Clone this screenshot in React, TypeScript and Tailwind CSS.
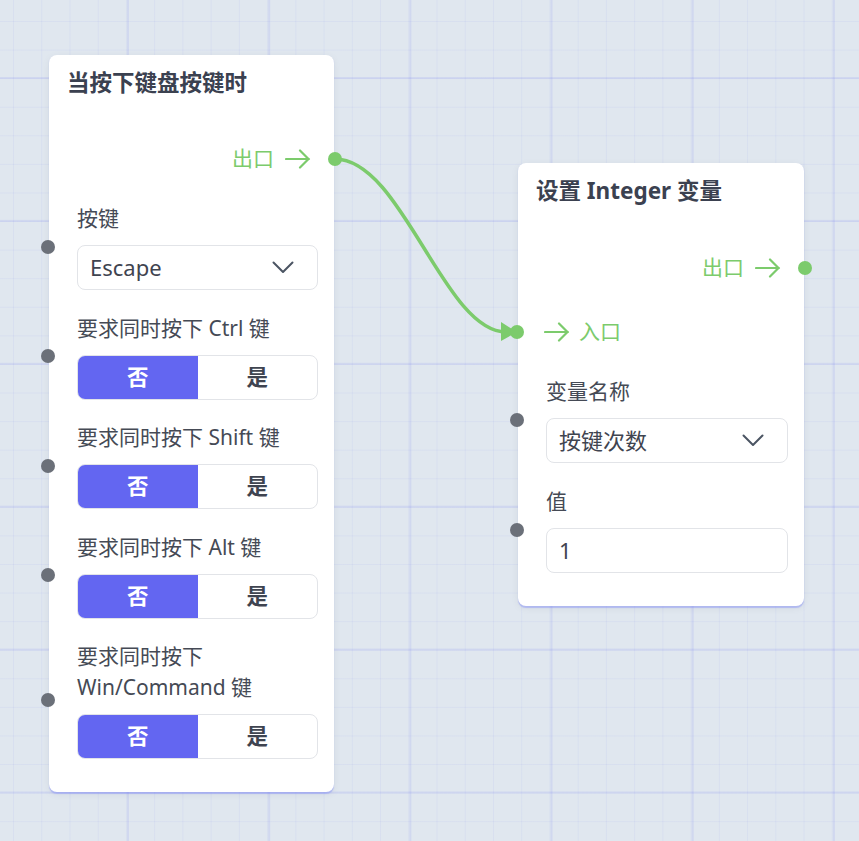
import type { ReactNode } from "react";

const font = "font-['Noto_Sans','Noto_Sans_CJK_SC',sans-serif]";

function ArrowGlyph() {
  return (
    <svg width="26" height="20" viewBox="0 0 26 20" fill="none" className="shrink-0">
      <path d="M1 10h23M15 1.5l8.5 8.5-8.5 8.5" stroke="#7ccb6c" strokeWidth="2.2" strokeLinecap="round" strokeLinejoin="round" />
    </svg>
  );
}

function Chevron() {
  return (
    <svg width="22" height="13" viewBox="0 0 22 13" fill="none">
      <path d="M1.5 1.5l9.5 9.5 9.5-9.5" stroke="#4b5563" strokeWidth="2" strokeLinecap="round" strokeLinejoin="round" />
    </svg>
  );
}

function Card({ title, className, children }: { title: string; className: string; children: ReactNode }) {
  return (
    <div
      className={`absolute rounded-lg bg-white pt-[13px] pb-[33px] shadow-[0_1.5px_1px_rgba(129,140,248,0.45),0_2px_8px_rgba(15,23,42,0.06)] ${className}`}
    >
      <div className="px-[18px] text-[22.5px] leading-[30px] font-bold text-[#3b4150]">{title}</div>
      {children}
    </div>
  );
}

function OutPort({ className = "" }: { className?: string }) {
  return (
    <div className={`relative flex h-[30px] items-center justify-end gap-[11px] pr-[23px] ${className}`}>
      <span className="text-[21px] text-[#7ccb6c]">出口</span>
      <ArrowGlyph />
      <span className="absolute right-[-8px] top-1/2 h-[14px] w-[14px] -translate-y-1/2 rounded-full bg-[#7ccb6c]" />
    </div>
  );
}

function InPort({ className = "" }: { className?: string }) {
  return (
    <div className={`relative flex h-[30px] items-center gap-[9px] pl-[26px] ${className}`}>
      <ArrowGlyph />
      <span className="text-[21px] text-[#7ccb6c]">入口</span>
      <span className="absolute left-[-8px] top-1/2 h-[14px] w-[14px] -translate-y-1/2 rounded-full bg-[#7ccb6c]" />
    </div>
  );
}

function Field({ label, children }: { label: ReactNode; children: ReactNode }) {
  return (
    <div className="relative flex flex-col gap-[11px] pl-[28px] pr-[16px]">
      <div className="text-[21px] leading-[31px] text-[#454a55]">{label}</div>
      {children}
      <span className="absolute left-[-8px] top-1/2 h-[14px] w-[14px] -translate-y-1/2 rounded-full bg-[#6b7079]" />
    </div>
  );
}

function Select({ value }: { value: string }) {
  return (
    <div className="flex h-[45px] items-center justify-between rounded-lg border border-[#e2e4e8] pl-[12px] pr-[23px]">
      <span className="text-[22px] text-[#3f4450]">{value}</span>
      <Chevron />
    </div>
  );
}

function Input({ value }: { value: string }) {
  return (
    <div className="flex h-[45px] items-center rounded-lg border border-[#e2e4e8] pl-[12px]">
      <span className="text-[22px] text-[#3f4450]">{value}</span>
    </div>
  );
}

function Toggle() {
  return (
    <div className="grid h-[45px] grid-cols-2 overflow-hidden rounded-lg border border-[#e2e4e8] text-[21.5px] font-bold">
      <div className="flex items-center justify-center bg-[#6366f1] text-white">否</div>
      <div className="flex items-center justify-center text-[#3f4450]">是</div>
    </div>
  );
}

export default function App() {
  return (
    <div
      className={`relative h-[841px] w-[859px] overflow-hidden bg-[#e0e7ef] ${font} bg-[image:linear-gradient(to_right,rgba(120,130,240,0.15)_2px,transparent_2px),linear-gradient(to_bottom,rgba(120,130,240,0.15)_2px,transparent_2px),linear-gradient(to_right,rgba(120,130,240,0.08)_1px,transparent_1px),linear-gradient(to_bottom,rgba(120,130,240,0.08)_1px,transparent_1px)] bg-[size:141.2px_142.9px,141.2px_142.9px,28.24px_28.58px,28.24px_28.58px] bg-[position:127px_77px,127px_77px,13px_21px,13px_21px]`}
    >
      <svg className="absolute inset-0" width="859" height="841" viewBox="0 0 859 841" fill="none">
        <path d="M335 159C402 159 444 332 506 332" stroke="#7ccb6c" strokeWidth="3.5" strokeLinecap="round" />
        <polygon points="501,322 517,332 501,341" fill="#7ccb6c" />
      </svg>

      <Card title="当按下键盘按键时" className="left-[49px] top-[55px] w-[285px]">
        <OutPort className="mt-[46px]" />
        <div className="mt-[29px] flex flex-col gap-[22.5px]">
          <Field label="按键">
            <Select value="Escape" />
          </Field>
          <Field label="要求同时按下 Ctrl 键">
            <Toggle />
          </Field>
          <Field label="要求同时按下 Shift 键">
            <Toggle />
          </Field>
          <Field label="要求同时按下 Alt 键">
            <Toggle />
          </Field>
          <Field
            label={
              <>
                要求同时按下
                <br />
                Win/Command 键
              </>
            }
          >
            <Toggle />
          </Field>
        </div>
      </Card>

      <Card title="设置 Integer 变量" className="left-[518px] top-[163px] w-[286px]">
        <OutPort className="mt-[47px]" />
        <InPort className="mt-[34px]" />
        <div className="mt-[29px] flex flex-col gap-[23px]">
          <Field label="变量名称">
            <Select value="按键次数" />
          </Field>
          <Field label="值">
            <Input value="1" />
          </Field>
        </div>
      </Card>
    </div>
  );
}
